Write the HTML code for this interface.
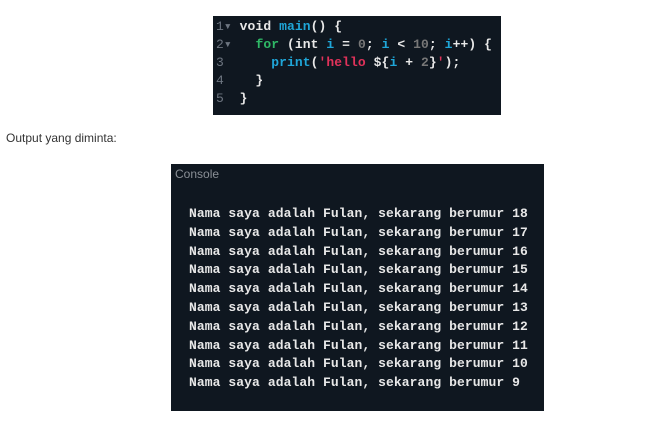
<!DOCTYPE html><html><head><style>
body{margin:0;width:647px;height:427px;background:#fff;position:relative;overflow:hidden}
.m{font-family:"Liberation Mono",monospace;font-size:13px;font-weight:bold;white-space:pre;position:absolute;letter-spacing:0.08px}
#code{left:213px;top:16px;width:288px;height:99px;background:#0f1720;}
#code div{position:absolute;left:3px;height:18px;line-height:18px;color:#e8e8e8}
.n{color:#6d7580;font-weight:normal}.k{color:#2fb866}.f{color:#1fa6d8}.s{color:#e0325a}.d{color:#777}
#out{left:6px;top:131px;position:absolute;font-family:"Liberation Sans",sans-serif;font-size:12px;color:#333}
#con{left:171px;top:164px;width:373px;height:247px;background:#0f1720;position:absolute}
#con .t{position:absolute;left:4px;top:3px;font-family:"Liberation Sans",sans-serif;font-size:12px;color:#8a8f96}
#con .l{left:18px;color:#e8e8e8;line-height:18.8px;top:41px}
</style></head><body>
<div id="code" class="m">
<div style="top:2px"><span class="n">1▾ </span>void <span class="f">main</span>() {</div>
<div style="top:20px"><span class="n">2▾ </span>  <span class="k">for</span> (int <span class="f">i</span> = <span class="d">0</span>; <span class="f">i</span> &lt; <span class="d">10</span>; <span class="f">i</span>++) {</div>
<div style="top:38px"><span class="n">3  </span>    <span class="f">print</span>(<span class="s">'hello </span>${<span class="f">i</span> + <span class="d">2</span>}<span class="s">'</span>);</div>
<div style="top:56px"><span class="n">4  </span>  }</div>
<div style="top:74px"><span class="n">5  </span>}</div>
</div>
<div id="out">Output yang diminta:</div>
<div id="con"><div class="t">Console</div>
<div class="m l">Nama saya adalah Fulan, sekarang berumur 18
Nama saya adalah Fulan, sekarang berumur 17
Nama saya adalah Fulan, sekarang berumur 16
Nama saya adalah Fulan, sekarang berumur 15
Nama saya adalah Fulan, sekarang berumur 14
Nama saya adalah Fulan, sekarang berumur 13
Nama saya adalah Fulan, sekarang berumur 12
Nama saya adalah Fulan, sekarang berumur 11
Nama saya adalah Fulan, sekarang berumur 10
Nama saya adalah Fulan, sekarang berumur 9</div></div>
</body></html>
